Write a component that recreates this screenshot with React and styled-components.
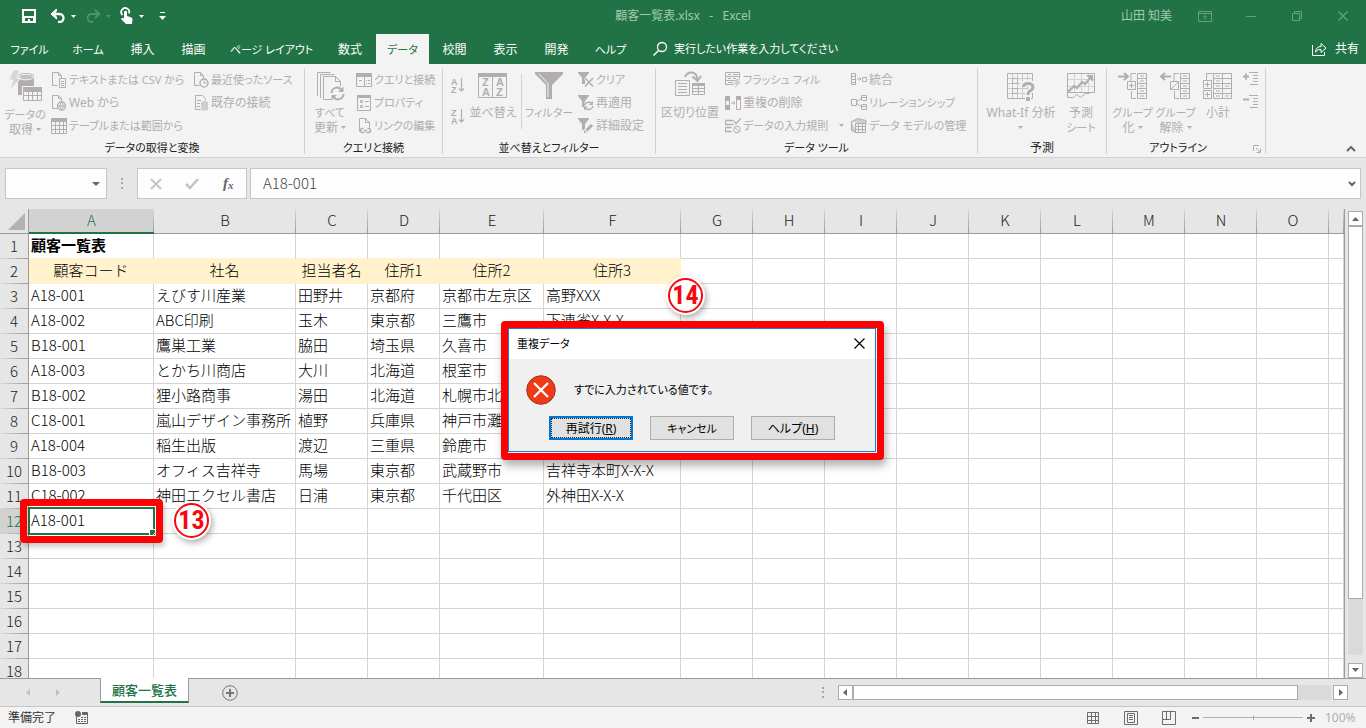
import React from "react";
import styled, { createGlobalStyle, css } from "styled-components";

const GREEN = "#217346";
const MUTED = "#b1adb1";
const UI_FONT = '"Noto Sans", "Noto Sans CJK JP", sans-serif';
const CELL_FONT = '"Noto Sans CJK JP", sans-serif';

/* Labels with katakana, or mostly kana, are set one size smaller than kanji labels. */
const labelSize = (text = "") => {
  const kana = (text.match(/[ぁ-んァ-ヶー]/g) || []).length;
  const compact = /[ァ-ヶー]/.test(text) || kana > text.length / 2;
  return compact ? 11 : 12;
};

const GlobalStyle = createGlobalStyle`
  *, *::before, *::after { box-sizing: border-box; }
  body { margin: 0; font-family: ${UI_FONT}; font-size: 12px; color: #222; }
  button, input { font: inherit; color: inherit; }
  button { border: 0; padding: 0; margin: 0; background: none; font-feature-settings: "palt"; }
  svg { display: block; flex: none; }
`;

const Window = styled.div`
  display: flex;
  flex-direction: column;
  height: 100vh;
  overflow: hidden;
  position: relative;
  background: #e6e6e6;
  font-feature-settings: "palt";
`;

const Label = styled.span`
  font-size: ${(p) => labelSize(p.children)}px;
  line-height: 15px;
  padding-bottom: 1px;
  white-space: nowrap;
`;

/* ---------- title bar ---------- */

const TitleBar = styled.header`
  display: grid;
  grid-template-columns: 1fr auto 1fr;
  align-items: center;
  height: 32px;
  flex: none;
  background: ${GREEN};
  color: #a3c9b1;
`;

const QuickAccess = styled.div`
  display: flex;
  align-items: center;
  gap: 4px;
  padding-left: 21px;
`;

const QuickButton = styled.button`
  display: flex;
  align-items: center;
  gap: 5px;
  height: 24px;
  color: ${(p) => (p.disabled ? "#4f9170" : "#fff")};
  margin-right: ${(p) => p.$after || 0}px;
`;

const DocumentTitle = styled.h1`
  margin: 0;
  padding-bottom: 2px;
  font-size: 12px;
  font-weight: 400;
  white-space: pre;
`;

const WindowControls = styled.div`
  display: flex;
  align-items: center;
  justify-content: flex-end;
`;

const UserName = styled.span`
  margin-right: 10px;
  padding-bottom: 2px;
`;

const ControlButton = styled.button`
  display: flex;
  align-items: center;
  justify-content: center;
  width: 46px;
  height: 32px;
  color: #64a17e;
`;

/* ---------- ribbon tabs ---------- */

const TabBar = styled.nav`
  display: flex;
  align-items: flex-end;
  height: 32px;
  flex: none;
  background: ${GREEN};
  color: #fff;
`;

const RibbonTab = styled.button`
  width: ${(p) => p.$width}px;
  height: 30px;
  background: ${(p) => (p.$active ? "#f3f3f3" : "transparent")};
  color: ${(p) => (p.$active ? GREEN : "#fff")};
`;

const TellMe = styled.label`
  display: flex;
  align-items: center;
  gap: 6px;
  height: 30px;
  margin-left: 13px;
`;

const TellMeInput = styled.input`
  width: 200px;
  padding: 0 0 1px;
  border: 0;
  outline: 0;
  background: none;
  font-size: 11px;
  font-feature-settings: "palt";
  &::placeholder { color: #fff; opacity: 1; }
`;

const ShareButton = styled.button`
  display: flex;
  align-items: center;
  gap: 8px;
  height: 30px;
  margin-left: auto;
  margin-right: 7px;
  color: #fff;
`;

/* ---------- ribbon ---------- */

const Ribbon = styled.section`
  display: flex;
  height: 94px;
  flex: none;
  padding-top: 4px;
  background: #f3f3f3;
  border-bottom: 1px solid #d2d2d2;
`;

const Group = styled.div`
  position: relative;
  display: flex;
  flex-direction: column;
  width: ${(p) => p.$width}px;
  height: 86px;
  flex: none;
  border-right: 1px solid #d2d2d2;
`;

const GroupTools = styled.div`
  display: flex;
  height: 70px;
  flex: none;
  padding-left: ${(p) => p.$inset || 0}px;
`;

const GroupLabel = styled.div`
  height: 20px;
  flex: none;
  padding-right: ${(p) => p.$reserve || 0}px;
  font-size: ${(p) => labelSize(p.children)}px;
  line-height: 20px;
  text-align: center;
  color: #222;
`;

const LargeButton = styled.button`
  display: flex;
  flex-direction: column;
  align-items: center;
  width: ${(p) => p.$width}px;
  flex: none;
  padding-top: 2px;
  gap: 3px;
  color: ${MUTED};
`;

const LabelLine = styled.span`
  display: flex;
  align-items: center;
  gap: 3px;
  height: 15px;
`;

const Column = styled.div`
  display: flex;
  flex-direction: column;
  flex: none;
  width: ${(p) => (p.$width ? `${p.$width}px` : "auto")};
  margin-left: ${(p) => p.$gap || 0}px;
`;

const SmallButton = styled.button`
  display: flex;
  align-items: center;
  gap: 2px;
  height: 23px;
  padding: 0 1px;
  color: ${MUTED};
`;

const SmallCaret = styled.span`
  margin-left: auto;
  margin-right: 5px;
`;

const SortColumn = styled.div`
  display: flex;
  flex-direction: column;
  align-items: center;
  width: 28px;
  padding: 6px 0 0 1px;
  gap: 8px;
  color: ${MUTED};
`;

const ToolRule = styled.div`
  width: 1px;
  height: 55px;
  margin: 6px 5px 0 6px;
  background: #d2d2d2;
`;

const Launcher = styled.button`
  position: absolute;
  right: 4px;
  bottom: 1px;
  color: ${MUTED};
`;

const CollapseButton = styled.button`
  margin-left: auto;
  align-self: flex-end;
  padding: 0 10px 5px 0;
  color: #666;
`;

/* ---------- formula bar ---------- */

const FormulaBar = styled.div`
  display: flex;
  align-items: center;
  height: 51px;
  flex: none;
  padding: 0 5px;
`;

const BarBox = styled.div`
  display: flex;
  align-items: center;
  height: 31px;
  background: #fdfdfd;
  border: 1px solid #c6c6c6;
  ${(p) => (p.$width ? css`width: ${p.$width}px; flex: none;` : css`flex: 1; margin-left: 3px;`)}
`;

const BarInput = styled.input`
  flex: 1;
  min-width: 0;
  height: 29px;
  padding: 0 0 2px 12px;
  border: 0;
  outline: 0;
  background: none;
  font-family: ${CELL_FONT};
  font-size: 15px;
  font-weight: 300;
  color: #444;
`;

const BarButton = styled.button`
  display: flex;
  align-items: center;
  justify-content: center;
  flex: ${(p) => (p.$narrow ? "none" : 1)};
  width: ${(p) => (p.$narrow ? `${p.$narrow}px` : "auto")};
  height: 29px;
  color: ${(p) => (p.$strong ? "#666" : "#c4c4c4")};
`;

const Grip = styled.div`
  display: flex;
  justify-content: center;
  width: 30px;
  flex: none;
  color: #a6a6a6;
`;

/* ---------- sheet ---------- */

const SheetArea = styled.main`
  display: flex;
  flex: 1;
  min-height: 0;
`;

const SheetView = styled.div`
  flex: 1;
  min-width: 0;
  overflow: hidden;
  background: #fff;
`;

const Grid = styled.table`
  width: 100%;
  table-layout: fixed;
  border-collapse: separate;
  border-spacing: 0;
  font-family: ${CELL_FONT};
  font-size: 15px;
  font-feature-settings: normal;
  color: #000;
`;

const ColumnHead = styled.th`
  height: 25px;
  padding: 0 0 2px;
  font-weight: 300;
  line-height: 20px;
  color: ${(p) => (p.$active ? GREEN : "#222")};
  border-bottom: ${(p) => (p.$active ? `2px solid ${GREEN}` : "1px solid #9b9b9b")};
  background:
    linear-gradient(#d8d8d8, #9b9b9b) right / 1px 100% no-repeat,
    ${(p) => (p.$active ? "#d2d2d2" : "#e6e6e6")};
`;

const Corner = styled.th`
  height: 25px;
  padding: 0 3px 3px 0;
  vertical-align: bottom;
  background: #e6e6e6;
  border-right: 1px solid #9b9b9b;
  border-bottom: 1px solid #9b9b9b;
  svg { margin-left: auto; }
`;

const RowHead = styled.th`
  height: 25px;
  padding: 0 0 2px;
  font-weight: 300;
  line-height: 20px;
  color: ${(p) => (p.$active ? GREEN : "#222")};
  border-right: 1px solid #9b9b9b;
  background:
    linear-gradient(to right, #d8d8d8, #9b9b9b) bottom / 100% 1px no-repeat,
    ${(p) => (p.$active ? "#d2d2d2" : "#e6e6e6")};
`;

const Cell = styled.td`
  position: relative;
  height: 25px;
  padding: 0 0 2px ${(p) => (p.$kind === "head" ? 0 : 2)}px;
  line-height: 20px;
  white-space: nowrap;
  font-weight: ${(p) => (p.$kind === "title" ? 700 : 300)};
  text-align: ${(p) => (p.$kind === "head" ? "center" : "left")};
  border-right: 1px solid #d4d4d4;
  border-bottom: 1px solid #d4d4d4;
  ${(p) => p.$aboveHead && css`border-bottom-color: #fff2cc;`}
  ${(p) => p.$kind === "head" && css`background: #fff2cc; border-color: #fff2cc;`}
`;

const Selection = styled.span`
  position: absolute;
  inset: -2px -2px -2px -1px;
  border: 2px solid ${GREEN};
  &::after {
    content: "";
    position: absolute;
    right: -2px;
    bottom: -2px;
    width: 5px;
    height: 5px;
    background: ${GREEN};
    outline: 1px solid #fff;
  }
`;

const CellFrame = styled.span`
  position: absolute;
  z-index: 1;
  inset: -10px -10px -10px -9px;
  border: 7px solid #fc0204;
  border-radius: 4px;
  box-shadow: 2px 4px 5px rgba(0, 0, 0, 0.2);
`;

const StepBadge = styled.span`
  position: absolute;
  z-index: 1;
  top: -6px;
  left: ${(p) => p.$left}px;
  display: flex;
  align-items: center;
  justify-content: center;
  width: 35px;
  height: 35px;
  padding-bottom: 2px;
  border: 2px solid #f40a0e;
  border-radius: 50%;
  background: #fff;
  box-shadow: 0 0 0 2px #fff, 2px 3px 6px 2px rgba(0, 0, 0, 0.3);
  font-family: "Liberation Sans Narrow", "Roboto Condensed", "Liberation Sans", sans-serif;
  font-size: 26px;
  font-weight: 700;
  line-height: 30px;
  color: #f40a0e;
`;

const VerticalScroll = styled.div`
  display: flex;
  flex-direction: column;
  width: 22px;
  flex: none;
  padding: 2px 3px 0 3px;
  border-left: 1px solid #9b9b9b;
  background: #e6e6e6;
`;

const ScrollButton = styled.button`
  display: flex;
  align-items: center;
  justify-content: center;
  width: 15px;
  height: 15px;
  flex: none;
  background: #fff;
  border: 1px solid #ababab;
  color: #666;
`;

const VerticalTrack = styled.div`
  flex: 1;
  margin-bottom: 8px;
  background: #dadada;
`;

const VerticalThumb = styled.div`
  height: 87%;
  border: 1px solid #ababab;
  background: #fff;
`;

/* ---------- sheet tabs ---------- */

const SheetBar = styled.div`
  display: flex;
  align-items: flex-start;
  height: 29px;
  flex: none;
  border-bottom: 1px solid #c6c6c6;
`;

const SheetNav = styled.div`
  display: flex;
  align-items: center;
  justify-content: center;
  gap: 22px;
  width: 100px;
  height: 28px;
  padding-right: 14px;
  border-top: 1px solid #9b9b9b;
  color: #c0c0c0;
`;

const SheetTab = styled.button`
  width: 89px;
  height: 25px;
  background: #fff;
  border: 1px solid #9b9b9b;
  border-top: 0;
  border-bottom: 2px solid ${GREEN};
  color: ${GREEN};
  font-size: 13px;
  font-weight: 500;
  line-height: 22px;
`;

const SheetBarRest = styled.div`
  display: flex;
  align-items: center;
  flex: 1;
  height: 28px;
  border-top: 1px solid #9b9b9b;
  padding: 0 18px 0 33px;
  color: #777;
`;

const HorizontalScroll = styled.div`
  display: flex;
  align-items: center;
  width: 48%;
  margin-left: auto;
  height: 15px;
`;

const HorizontalTrack = styled.div`
  flex: 1;
  height: 15px;
  margin-right: 2px;
  background: #dadada;
`;

const HorizontalThumb = styled.div`
  width: 93%;
  height: 15px;
  border: 1px solid #ababab;
  background: #fff;
`;

/* ---------- status bar ---------- */

const StatusBar = styled.footer`
  display: flex;
  align-items: center;
  height: 21px;
  flex: none;
  padding: 0 8px;
  background: #f3f3f3;
  color: #333;
`;

const MacroButton = styled.button`
  margin-left: 19px;
  color: #666;
`;

const StatusRight = styled.div`
  display: flex;
  align-items: center;
  margin-left: auto;
  color: #6c6c6c;
`;

const ViewButton = styled.button`
  width: 14px;
  margin-right: ${(p) => p.$after}px;
`;

const ZoomSlider = styled.input`
  appearance: none;
  width: 100px;
  height: 14px;
  margin: 0 4px;
  background:
    linear-gradient(#b0b0b0, #b0b0b0) center / 100% 1px no-repeat,
    linear-gradient(#b0b0b0, #b0b0b0) center / 1px 5px no-repeat;
  &::-webkit-slider-thumb { appearance: none; width: 1px; height: 5px; background: #b0b0b0; }
`;

const ZoomValue = styled.span`
  width: 33px;
  margin-left: 10px;
  color: #b0b0b0;
`;

/* ---------- dialog ---------- */

const DialogFrame = styled.div`
  position: absolute;
  z-index: 2;
  top: 321px;
  left: calc(50% - 182px);
  width: 383px;
  border: 7px solid #fc0204;
  border-radius: 4px;
  background: #fff;
  padding: 0 1px 1px 0;
  box-shadow: 2px 6px 8px rgba(0, 0, 0, 0.3);
`;

const DialogBox = styled.section`
  border: 1px solid #1883d7;
  background: #f0f0f0;
  color: #000;
`;

const DialogTitle = styled.div`
  display: flex;
  align-items: center;
  justify-content: space-between;
  height: 30px;
  padding: 0 10px 1px 8px;
  background: #fff;
`;

const DialogMessage = styled.div`
  display: flex;
  align-items: center;
  gap: 18px;
  height: 62px;
  padding: 0 17px;
`;

const DialogActions = styled.div`
  display: flex;
  gap: 17px;
  height: 35px;
  margin-top: -5px;
  padding: 0 0 0 40px;
`;

const DialogButton = styled.button`
  width: 84px;
  height: 24px;
  background: #e1e1e1;
  border: ${(p) => (p.$focused ? "2px solid #0078d7" : "1px solid #adadad")};
  ${(p) => p.$focused && css`outline: 1px dotted #222; outline-offset: -3px;`}
`;

/* ---------- icons ---------- */

const Svg = ({ w = 16, h = 16, children, ...rest }) => (
  <svg width={w} height={h} viewBox={`0 0 ${w} ${h}`} fill="none" stroke="currentColor" aria-hidden="true" {...rest}>
    {children}
  </svg>
);

const Caret = ({ w = 5, h = 3 }) => (
  <Svg w={w} h={h} fill="currentColor" stroke="none">
    <path d={`M0 0H${w}L${w / 2} ${h}Z`} />
  </Svg>
);

const SaveIcon = () => (
  <Svg>
    <path fill="currentColor" stroke="none" fillRule="evenodd" d="M1 1h14v14H1zM3 3v5h10V3zM4 10v3h3v-2h2v2h3v-3z" />
  </Svg>
);
const UndoIcon = () => (
  <Svg w={16} h={14}>
    <path d="M4 5h5.500a4 4 0 0 1 0 8H8" strokeWidth="2.300" />
    <path d="M6.500 0L1 5l5.500 5V8L4 5l2.500-3z" fill="currentColor" />
  </Svg>
);
const RedoIcon = () => (
  <Svg w={16} h={14}>
    <path d="M14 5H6.500a4 4 0 0 0 0 8H8" strokeWidth="1.800" />
    <path d="M10 1l4.500 4L10 9" strokeWidth="1.800" />
  </Svg>
);
const TouchIcon = () => (
  <Svg w={14} h={18}>
    <path d="M2.500 8A4 4 0 1 1 9 6.500" strokeWidth="1.800" />
    <path fill="currentColor" stroke="none" d="M4 4.500q1.500-1.500 3 0V9l4.500 1.500q1 .5 1 2L12 17H6l-5-5q.5-1.500 2-1l1 .8z" />
  </Svg>
);
const CustomizeIcon = () => (
  <Svg w={7} h={8} fill="currentColor" stroke="none">
    <path d="M1 0h5v1H1zM0 4h7L3.500 8z" />
  </Svg>
);
const RibbonOptionsIcon = () => (
  <Svg w={14} h={11}>
    <path d="M.5.500h13v10H.500zM.5 2.500h13M7 9V4.500M5 6.500l2-2 2 2" />
  </Svg>
);
const MinimizeIcon = () => <Svg w={10} h={10}><path d="M0 5.500h10" /></Svg>;
const RestoreIcon = () => <Svg w={10} h={10}><path d="M.5 2.500h7v7h-7zM2.500 2.500v-2h7v7h-2" /></Svg>;
const CloseIcon = ({ size = 10 }) => (
  <Svg w={size} h={size}><path d={`M.5.500L${size - 0.5} ${size - 0.5}M${size - 0.5}.500L.5 ${size - 0.5}`} strokeWidth="1.200" /></Svg>
);
const SearchIcon = () => (
  <Svg><circle cx="10" cy="6" r="4.500" strokeWidth="1.300" /><path d="M6.500 9.500L1.500 14.500" strokeWidth="1.500" /></Svg>
);
const ShareIcon = () => (
  <Svg>
    <path d="M1.500 4v10.500h12V11" />
    <path d="M4.500 11q.5-5.500 5.500-5.500V2.500L15 7l-5 4.500V8.500Q6.500 8 4.500 11z" />
  </Svg>
);

const DataGetIcon = () => (
  <Svg w={34} h={34} stroke="none">
    <path fill="currentColor" d="M10 6q1-3 8-3t8 3v19H10z" />
    <ellipse cx="18" cy="7" rx="7.500" ry="2.800" fill="#c4c0c4" stroke="#f3f3f3" />
    <path fill="#d8d5d8" stroke="#f3f3f3" d="M5 0h7L9 8h4L2 20l3-10H1z" />
    <path fill="#f3f3f3" d="M14 16h20v18H14z" />
    <path fill="currentColor" d="M15 17h19v4H15z" />
    <path stroke="currentColor" d="M15.500 17.500h18v13h-18zM15.500 25.500h18M15.500 21.500h18M20.500 21v9M24.500 21v9M29.500 21v9" />
  </Svg>
);
const page = "M1.500.500h6l3 3v3M1.500.500v13h5M7.500.500v3h3";
const TextFileIcon = () => (
  <Svg><path d={page} /><path d="M8.500 6.500h6v9h-6zM10 9.500h3M10 11.500h3M10 13.500h3" /></Svg>
);
const WebIcon = () => (
  <Svg><path d={page} /><circle cx="10.500" cy="11" r="4" strokeWidth="1.300" /><path d="M6.500 11h8M10.500 7c-2 2-2 6 0 8M10.500 7c2 2 2 6 0 8" /></Svg>
);
const TableIcon = () => (
  <Svg>
    <path fill="currentColor" stroke="none" d="M0 0h16v4H0z" />
    <path d="M.5.500h15v15H.500zM.5 7.500h15M.5 11.500h15M4.500 4v11M8.500 4v11M12.500 4v11" />
  </Svg>
);
const RecentIcon = () => (
  <Svg><path d={page} /><circle cx="11" cy="11" r="4" strokeWidth="1.300" /><path d="M11 8.500V11h2.500" /></Svg>
);
const ExistingIcon = () => (
  <Svg>
    <path d="M2.500.500h7l3 3v2M2.500.500v14h5M4 5.500h4M4 8.500h3M4 11.500h3" />
    <path fill="#d0ccd0" stroke="none" d="M8 8q0-2 3.500-2T15 8v6q0 1.500-3.500 1.500T8 14z" />
  </Svg>
);
const RefreshArrows = ({ x = 0, y = 0 }) => (
  <g transform={`translate(${x} ${y})`}>
    <path d="M1.500 7a5.500 5.500 0 0 1 10-3M13.500 8a5.500 5.500 0 0 1-10 3" strokeWidth="2" />
    <path d="M13.500.500v5.500H8zM1.500 14.500V9H7z" fill="currentColor" stroke="none" />
  </g>
);
const RefreshAllIcon = () => (
  <Svg w={32} h={32}>
    <path d="M3.500 26V2.500h13M6.500 28V4.500h14M9.500 29.500V6.500h12l5 5v5M21.500 6.500v5h5M9.500 29.500h8" />
    <RefreshArrows x={16} y={16} />
  </Svg>
);
const QueryPanelIcon = () => (
  <Svg>
    <path fill="currentColor" stroke="none" d="M0 1h16v4H0z" />
    <path d="M.5 1.500h15v13H.500zM8.500 5v9M3 8.500h3M10 8.500h1M12 8.500h2M10 11.500h1M12 11.500h2" />
  </Svg>
);
const PropertiesIcon = () => (
  <Svg>
    <path fill="currentColor" stroke="none" d="M1 0h14v3H1z" />
    <path d="M1.500.500h13v15h-13zM4.500 5.500h2v2h-2zM4.500 10.500h2v2h-2zM9 6.500h4M9 11.500h4" />
  </Svg>
);
const EditLinksIcon = () => (
  <Svg>
    <path d="M3.500 13.500v-13h6l4 4v5M9.500.500v4h4" />
    <path d="M7.500 10.500h-1a2 2 0 0 0 0 4h2M11 12.500H8M11.500 10.500h1a2 2 0 0 1 0 4h-2" strokeWidth="1.500" />
  </Svg>
);
const letterStyle = { fontFamily: '"Liberation Sans", sans-serif', fontWeight: 700 };
const SortIcon = ({ first, second }) => (
  <Svg w={16} h={23}>
    <g fill="currentColor" stroke="none" fontSize="9" {...letterStyle}>
      <text x="1" y="11">{first}</text>
      <text x="1" y="19">{second}</text>
    </g>
    <path d="M11.500 4v13M9 14.500l2.500 2.500L14 14.500" strokeWidth="1.200" />
  </Svg>
);
const SortDialogIcon = () => (
  <Svg w={30} h={32}>
    <path fill="currentColor" stroke="none" d="M0 3h29v4H0z" />
    <path d="M.5 3.500h28v24H.500zM14.500 7v20" />
    <g fill="currentColor" stroke="none" fontSize="11" {...letterStyle}>
      <text x="4" y="16">Z</text><text x="4" y="26">A</text>
      <text x="18" y="16">A</text><text x="18" y="26">Z</text>
    </g>
  </Svg>
);
const FilterIcon = () => (
  <Svg w={28} h={32} stroke="none">
    <path fill="currentColor" d="M0 2h28v2L17 15v14h-6V15L0 4z" />
    <path stroke="#f3f3f3" d="M4 4l9 9.500V27" />
  </Svg>
);
const smallFunnel = <path fill="currentColor" stroke="none" d="M0 0h11v1L7 6v6H4V6L0 1z" />;
const ClearIcon = () => (
  <Svg>{smallFunnel}<path d="M7 6l8 9M15 6l-8 9" stroke="#f3f3f3" strokeWidth="3" /><path d="M7 6l8 8.500M15 6l-8 8.500" strokeWidth="1.500" /></Svg>
);
const ReapplyIcon = () => (
  <Svg>{smallFunnel}<path stroke="#f3f3f3" strokeWidth="8" d="M10.500 7v8" />
    <path d="M6.500 10a4.500 4 0 0 1 7.500-1.500M15 11a4.500 4 0 0 1-7.500 2.500" strokeWidth="1.500" /><path d="M15 6v4h-4zM6 15.500v-4h4z" fill="currentColor" stroke="none" />
  </Svg>
);
const AdvancedIcon = () => (
  <Svg>{smallFunnel}<path d="M7 14l7-7" stroke="#f3f3f3" strokeWidth="5" /><path d="M8.500 12.500L14 7" strokeWidth="3" /><path fill="currentColor" stroke="none" d="M6 15v-3l3 2.500z" /></Svg>
);
const SplitIcon = () => (
  <Svg w={32} h={32}>
    <path d="M1.500 10.500h14v15h-14zM4 13.500h9M4 16.500h9M4 19.500h9M4 22.500h9" />
    <path d="M18.500 14.500h12v10h-12zM18.500 18.500h12M18.500 21.500h12M24.500 14v10" />
    <path fill="currentColor" stroke="none" d="M18 13h13v3H18z" />
    <path d="M11 7q2-5 7-4.500 5 .5 5.500 7.500" strokeWidth="2" />
    <path d="M18.500 6.500l5 4.500 3.500-5" strokeWidth="2" />
  </Svg>
);
const FlashFillIcon = () => (
  <Svg><path d="M.5.500h14v6M.5.500v12h8M.5 4.500h14M.5 8.500h10M3 2.500h3M8 2.500h5M3 6.500h3M3 10.500h5M8 6.500h3" />
    <path fill="#d0ccd0" stroke="none" d="M11 7h4l-2 3h3l-6 6 1-4H9z" /></Svg>
);
const DuplicatesIcon = () => (
  <Svg><path d="M.5 1.500h4v13h-4zM11.500 1.500h4v13h-4zM6 8h4M8.500 6.500L10 8 8.500 9.500" />
    <path fill="currentColor" stroke="none" d="M0 1h5v5H0zM0 10h5v5H0zM11 1h5v4h-5z" /></Svg>
);
const ValidationIcon = () => (
  <Svg><path d="M.5 2.500h8M.5 2.500v4h8M.5 9.500h6M.5 9.500v4h6M9 3l2 3 4.500-5.500" strokeWidth="1.300" />
    <circle cx="12" cy="11.500" r="3.300" /><path d="M9.500 9.500l5 4" /></Svg>
);
const ConsolidateIcon = () => (
  <Svg><path d="M.5 1.500h4v11h-4zM.5 4.500h4M.5 7.500h4M.5 10.500h4M6 7h4M8.500 5.500L10 7 8.500 8.500M11.500 5.500h4v4h-4z" /></Svg>
);
const RelationIcon = () => (
  <Svg><path d="M.5 4.500h5v6h-5zM10.500.500h5v5h-5zM10.500 9.500h5v5h-5zM5.500 7l5-4M5.500 8l5 4M10.500 2.500h5M10.500 11.500h5" /></Svg>
);
const DataModelIcon = () => (
  <Svg>
    <path d="M.5 3.500L7 .500l8 2v4M.5 3.500v9l5 2.500" fill="#d0ccd0" />
    <path d="M4.500 5.500h10v9h-10zM4.500 8.500h10M4.500 11.500h10M7.500 5.500v9M11.500 5.500v9" fill="#f3f3f3" />
  </Svg>
);
const WhatIfIcon = () => (
  <Svg w={30} h={32}>
    <path stroke="#cbc7cb" d="M1.500 8.500h25M1.500 13.500h25M1.500 18.500h25M1.500 23.500h25M6.500 3v25M11.500 3v25M16.500 3v25M21.500 3v25" />
    <path d="M1.500 3.500h25v25h-25zM6.500 8.500h5v5h-5zM6.500 18.500h5v5h-5z" />
    <path d="M17 17q0-4 5-4t5 4q0 2.500-3 4-2 1-2 5.500" stroke="#f3f3f3" strokeWidth="6" />
    <path d="M17.500 17q0-3.500 4.500-3.500t5 3.500q0 2.500-3 4-2 1-2 4" strokeWidth="3" />
    <path fill="currentColor" stroke="#f3f3f3" d="M19.500 26.500h5v5h-5z" />
  </Svg>
);
const ForecastIcon = () => (
  <Svg w={30} h={32}>
    <path stroke="#d4d0d4" d="M8.500 4v18M15.500 4v18M22.500 4v18M2 9.500h26M2 16.500h26" />
    <path d="M1.500 3.500h27v19h-27z" />
    <path d="M1.500 22v5.500h6l3-3 4 3 5-4h4" />
    <path d="M2 22l6-6 3 2 5-6 3 2 7-8" strokeWidth="2.200" />
    <path fill="currentColor" stroke="none" d="M20 5h7v7z" />
  </Svg>
);
const rowStack = "M21.500 3.500h9v25h-9zM21.500 8.500h9M21.500 13.500h9M21.500 18.500h9M21.500 23.500h9M24 6h4M24 11h4M24 16h4M24 21h4M24 26h4";
const GroupIcon = () => (
  <Svg w={34} h={32}>
    <path d={rowStack} /><path d="M20 3.500h-5V11M15.500 21v7.500H20M11.500 11.500h8v8h-8zM13 15.500h5M15.500 13v5" />
    <path d="M2 6.500h9M8 3l4 3.500-4 3.500" strokeWidth="2" />
  </Svg>
);
const UngroupIcon = () => (
  <Svg w={34} h={32}>
    <path d={rowStack} /><path d="M20 3.500h-5V11M15.500 21v7.500H20M11.500 11.500h8v8h-8zM12 19l7-7" />
    <path d="M12 6.500H3M6 3L2 6.500 6 10" strokeWidth="2" />
  </Svg>
);
const SubtotalIcon = () => (
  <Svg w={32} h={32}>
    <path d="M11.500 3.500h18v25h-18zM11.500 8.500h18M11.500 13.500h18M11.500 18.500h18M11.500 23.500h18M20.500 3v25M4.500 11V3.500H11M14 6h4M14 11h4M14 16h4M14 21h4M14 26h4M23 16h4M23 26h4" />
    <path d="M1.500 10.500h8v8h-8zM1.500 20.500h8v8h-8zM3 14.500h5M5.500 12v5M3 24.500h5M5.500 22v5" fill="#f3f3f3" />
  </Svg>
);
const DetailIcon = ({ plus }) => (
  <Svg h={18}>
    <path d={plus ? "M0 5.500h6M3 2.500v6" : "M0 5.500h6"} strokeWidth="2" />
    <path d="M6 1.500h9M10 4.500h5M10 7.500h5M10 10.500h5M7 13.500h8" />
  </Svg>
);
const LauncherIcon = () => <Svg w={8} h={8}><path d="M.5 6V.500H6M3 3l4 4M7.500 3.500v4h-4" /></Svg>;
const ChevronUp = () => <Svg w={10} h={6}><path d="M1 5l4-4 4 4" strokeWidth="2" /></Svg>;
const ChevronDown = () => <Svg w={8} h={6}><path d="M1 1l3 3 3-3" strokeWidth="2" /></Svg>;
const GripIcon = () => (
  <Svg w={2} h={11} fill="currentColor" stroke="none"><path d="M0 0h2v2H0zM0 4h2v2H0zM0 9h2v2H0z" /></Svg>
);
const CancelIcon = () => <Svg w={12} h={12}><path d="M1 1l10 10M11 1L1 11" strokeWidth="2" /></Svg>;
const CheckIcon = () => <Svg w={14} h={12}><path d="M1 6l4 4 8-9" strokeWidth="2.500" /></Svg>;
const FxIcon = () => (
  <Svg w={14} h={14} fill="currentColor" stroke="none">
    <g fontFamily='"Liberation Serif", serif' fontStyle="italic" fontWeight="700">
      <text x="2" y="11" fontSize="15">f</text><text x="7" y="12" fontSize="11">x</text>
    </g>
  </Svg>
);
const CornerIcon = () => <Svg w={17} h={17} fill="#b2b2b2" stroke="none"><path d="M17 0v17H0z" /></Svg>;
const Triangle = ({ dir }) => {
  const paths = { up: "M0 6l3.500-4L7 6z", down: "M0 1h7L3.500 5z", left: "M5 0v7L1 3.500z", right: "M2 0v7l4-3.500z" };
  return <Svg w={7} h={7} fill="currentColor" stroke="none"><path d={paths[dir]} /></Svg>;
};
const AddSheetIcon = () => (
  <Svg><circle cx="8" cy="8" r="7.300" /><path d="M4 8h8M8 4v8" strokeWidth="2" /></Svg>
);
const MacroIcon = () => (
  <Svg w={13} h={13}>
    <path d="M1.500 5v7.500h11v-11H7M3 8.500h2M6 8.500h2M9 8.500h2M3 10.500h2M6 10.500h2M9 10.500h2M6 6.500h2M9 6.500h2" />
    <path d="M7 2.500h5" strokeWidth="3" /><circle cx="3" cy="3" r="3" fill="currentColor" stroke="none" />
  </Svg>
);
const NormalViewIcon = () => <Svg w={14} h={14}><path d="M1.500 1.500h11v11h-11zM1.500 5.500h11M1.500 9.500h11M5.500 1v11M9.500 1v11" /></Svg>;
const PageViewIcon = () => <Svg w={14} h={14}><path d="M.5.500h13v13H.500zM3.500 2.500h7v9h-7zM5 4.500h4M5 6.500h4M5 8.500h4" /></Svg>;
const BreakViewIcon = () => <Svg w={14} h={14}><path d="M.5.500h13v13H.500zM.5 8.500h8v-8M4.500.500v8" /></Svg>;
const ErrorIcon = () => (
  <Svg w={30} h={30}>
    <circle cx="15" cy="15" r="14.300" fill="#f03a17" stroke="#a93122" />
    <path d="M8 8l14 14M22 8L8 22" stroke="#fff" strokeWidth="2.300" />
  </Svg>
);

/* ---------- data ---------- */

const tabs = [
  ["ファイル", 59], ["ホーム", 58], ["挿入", 51], ["描画", 51], ["ページ レイアウト", 105], ["数式", 52],
  ["データ", 53], ["校閲", 51], ["表示", 51], ["開発", 51], ["ヘルプ", 57],
];

const columns = [
  ["A", 125], ["B", 142], ["C", 72], ["D", 72], ["E", 104], ["F", 137], ["G", 72], ["H", 72],
  ["I", 72], ["J", 72], ["K", 72], ["L", 72], ["M", 72], ["N", 72], ["O", 72],
];

const records = [
  ["顧客一覧表"],
  ["顧客コード", "社名", "担当者名", "住所1", "住所2", "住所3"],
  ["A18-001", "えびす川産業", "田野井", "京都府", "京都市左京区", "高野XXX"],
  ["A18-002", "ABC印刷", "玉木", "東京都", "三鷹市", "下連雀X-X-X"],
  ["B18-001", "鷹巣工業", "脇田", "埼玉県", "久喜市", ""],
  ["A18-003", "とかち川商店", "大川", "北海道", "根室市", ""],
  ["B18-002", "狸小路商事", "湯田", "北海道", "札幌市北区", ""],
  ["C18-001", "嵐山デザイン事務所", "植野", "兵庫県", "神戸市灘区", ""],
  ["A18-004", "稲生出版", "渡辺", "三重県", "鈴鹿市", ""],
  ["B18-003", "オフィス吉祥寺", "馬場", "東京都", "武蔵野市", "吉祥寺本町X-X-X"],
  ["C18-002", "神田エクセル書店", "日浦", "東京都", "千代田区", "外神田X-X-X"],
  ["A18-001"],
];

const ROWS = 18;
const ACTIVE_ROW = 11;

const Large = ({ icon, lines, width, caret }) => (
  <LargeButton disabled $width={width}>
    {icon}
    <span>
      {lines.map((line, i) => (
        <LabelLine key={i} style={{ justifyContent: "center" }}>
          {line && <Label>{line}</Label>}
          {caret && i === lines.length - 1 && <Caret />}
        </LabelLine>
      ))}
    </span>
  </LargeButton>
);

const Small = ({ icon, label, caret, hint }) => (
  <SmallButton disabled aria-label={hint}>
    {icon}
    {label && <Label>{label}</Label>}
    {caret && <SmallCaret><Caret /></SmallCaret>}
  </SmallButton>
);

const cellKind = (r, c) => {
  if (r === 0 && c === 0) return "title";
  if (r === 1 && c < 6) return "head";
  return "body";
};

export default function App() {
  return (
    <>
      <GlobalStyle />
      <Window>
        <TitleBar>
          <QuickAccess>
            <QuickButton aria-label="上書き保存" $after={9}><SaveIcon /></QuickButton>
            <QuickButton aria-label="元に戻す" $after={5}><UndoIcon /><Caret /></QuickButton>
            <QuickButton aria-label="やり直し" disabled $after={5}><RedoIcon /><Caret /></QuickButton>
            <QuickButton aria-label="タッチ/マウス モードの切り替え" $after={11}><TouchIcon /><Caret /></QuickButton>
            <QuickButton aria-label="クイック アクセス ツール バーのユーザー設定"><CustomizeIcon /></QuickButton>
          </QuickAccess>
          <DocumentTitle>{"顧客一覧表.xlsx   -   Excel"}</DocumentTitle>
          <WindowControls>
            <UserName>山田 知美</UserName>
            <ControlButton aria-label="リボンの表示オプション"><RibbonOptionsIcon /></ControlButton>
            <ControlButton aria-label="最小化"><MinimizeIcon /></ControlButton>
            <ControlButton aria-label="元のサイズに戻す"><RestoreIcon /></ControlButton>
            <ControlButton aria-label="閉じる"><CloseIcon /></ControlButton>
          </WindowControls>
        </TitleBar>

        <TabBar>
          {tabs.map(([name, width]) => (
            <RibbonTab key={name} $width={width} $active={name === "データ"}><Label>{name}</Label></RibbonTab>
          ))}
          <TellMe>
            <SearchIcon />
            <TellMeInput aria-label="操作アシスト" placeholder="実行したい作業を入力してください" />
          </TellMe>
          <ShareButton><ShareIcon /><Label>共有</Label></ShareButton>
        </TabBar>

        <Ribbon>
          <Group $width={305}>
            <GroupTools>
              <Large icon={<DataGetIcon />} lines={["データの", "取得"]} width={50} caret />
              <Column $width={142}>
                <Small icon={<TextFileIcon />} label="テキストまたは CSV から" />
                <Small icon={<WebIcon />} label="Web から" />
                <Small icon={<TableIcon />} label="テーブルまたは範囲から" />
              </Column>
              <Column>
                <Small icon={<RecentIcon />} label="最近使ったソース" />
                <Small icon={<ExistingIcon />} label="既存の接続" />
              </Column>
            </GroupTools>
            <GroupLabel>データの取得と変換</GroupLabel>
          </Group>
          <Group $width={138}>
            <GroupTools>
              <Large icon={<RefreshAllIcon />} lines={["すべて", "更新"]} width={50} caret />
              <Column>
                <Small icon={<QueryPanelIcon />} label="クエリと接続" />
                <Small icon={<PropertiesIcon />} label="プロパティ" />
                <Small icon={<EditLinksIcon />} label="リンクの編集" />
              </Column>
            </GroupTools>
            <GroupLabel>クエリと接続</GroupLabel>
          </Group>
          <Group $width={213}>
            <GroupTools>
              <SortColumn>
                <SortIcon first="A" second="Z" />
                <SortIcon first="Z" second="A" />
              </SortColumn>
              <Large icon={<SortDialogIcon />} lines={["並べ替え"]} width={44} />
              <ToolRule />
              <Large icon={<FilterIcon />} lines={["フィルター"]} width={44} />
              <Column $gap={6}>
                <Small icon={<ClearIcon />} label="クリア" />
                <Small icon={<ReapplyIcon />} label="再適用" />
                <Small icon={<AdvancedIcon />} label="詳細設定" />
              </Column>
            </GroupTools>
            <GroupLabel>並べ替えとフィルター</GroupLabel>
          </Group>
          <Group $width={322}>
            <GroupTools>
              <Large icon={<SplitIcon />} lines={["区切り位置"]} width={68} />
              <Column $width={126}>
                <Small icon={<FlashFillIcon />} label="フラッシュ フィル" />
                <Small icon={<DuplicatesIcon />} label="重複の削除" />
                <Small icon={<ValidationIcon />} label="データの入力規則" caret />
              </Column>
              <Column>
                <Small icon={<ConsolidateIcon />} label="統合" />
                <Small icon={<RelationIcon />} label="リレーションシップ" />
                <Small icon={<DataModelIcon />} label="データ モデルの管理" />
              </Column>
            </GroupTools>
            <GroupLabel>データ ツール</GroupLabel>
          </Group>
          <Group $width={129}>
            <GroupTools>
              <Large icon={<WhatIfIcon />} lines={["What-If 分析", ""]} width={86} caret />
              <Large icon={<ForecastIcon />} lines={["予測", "シート"]} width={34} />
            </GroupTools>
            <GroupLabel>予測</GroupLabel>
          </Group>
          <Group $width={159}>
            <GroupTools $inset={4}>
              <Large icon={<GroupIcon />} lines={["グループ", "化"]} width={43} caret />
              <Large icon={<UngroupIcon />} lines={["グループ", "解除"]} width={43} caret />
              <Large icon={<SubtotalIcon />} lines={["小計"]} width={42} />
              <Column $gap={3}>
                <Small icon={<DetailIcon plus />} hint="詳細データの表示" />
                <Small icon={<DetailIcon />} hint="詳細を表示しない" />
              </Column>
            </GroupTools>
            <GroupLabel $reserve={16}>アウトライン</GroupLabel>
            <Launcher aria-label="アウトラインの設定"><LauncherIcon /></Launcher>
          </Group>
          <CollapseButton aria-label="リボンを折りたたむ"><ChevronUp /></CollapseButton>
        </Ribbon>

        <FormulaBar>
          <BarBox $width={102}>
            <BarInput aria-label="名前ボックス" />
            <BarButton $narrow={20} $strong aria-label="名前の一覧"><Caret w={8} h={4} /></BarButton>
          </BarBox>
          <Grip><GripIcon /></Grip>
          <BarBox $width={110}>
            <BarButton aria-label="キャンセル"><CancelIcon /></BarButton>
            <BarButton aria-label="入力"><CheckIcon /></BarButton>
            <BarButton $strong aria-label="関数の挿入"><FxIcon /></BarButton>
          </BarBox>
          <BarBox>
            <BarInput aria-label="数式バー" defaultValue="A18-001" />
            <BarButton $narrow={16} $strong aria-label="数式バーの展開"><ChevronDown /></BarButton>
          </BarBox>
        </FormulaBar>

        <SheetArea>
          <SheetView>
            <Grid>
              <colgroup>
                <col style={{ width: 29 }} />
                {columns.map(([name, width]) => <col key={name} style={{ width }} />)}
                <col />
              </colgroup>
              <thead>
                <tr>
                  <Corner><CornerIcon /></Corner>
                  {columns.map(([name], c) => <ColumnHead key={name} $active={c === 0}>{name}</ColumnHead>)}
                  <ColumnHead />
                </tr>
              </thead>
              <tbody>
                {Array.from({ length: ROWS }, (_, r) => (
                  <tr key={r}>
                    <RowHead $active={r === ACTIVE_ROW}>{r + 1}</RowHead>
                    {columns.map(([name], c) => (
                      <Cell key={name} $kind={cellKind(r, c)} $aboveHead={r === 0 && c < 6}>
                        {records[r]?.[c]}
                        {r === 2 && c === 5 && <StepBadge $left={124}>14</StepBadge>}
                        {r === ACTIVE_ROW && c === 0 && (
                          <>
                            <Selection />
                            <CellFrame />
                            <StepBadge $left={145}>13</StepBadge>
                          </>
                        )}
                      </Cell>
                    ))}
                    <Cell />
                  </tr>
                ))}
              </tbody>
            </Grid>
          </SheetView>
          <VerticalScroll>
            <ScrollButton aria-label="上へスクロール"><Triangle dir="up" /></ScrollButton>
            <VerticalTrack><VerticalThumb /></VerticalTrack>
            <ScrollButton aria-label="下へスクロール"><Triangle dir="down" /></ScrollButton>
          </VerticalScroll>
        </SheetArea>

        <SheetBar>
          <SheetNav><Triangle dir="left" /><Triangle dir="right" /></SheetNav>
          <SheetTab>顧客一覧表</SheetTab>
          <SheetBarRest>
            <button aria-label="新しいシート"><AddSheetIcon /></button>
            <HorizontalScroll>
              <Grip><GripIcon /></Grip>
              <ScrollButton aria-label="左へスクロール"><Triangle dir="left" /></ScrollButton>
              <HorizontalTrack><HorizontalThumb /></HorizontalTrack>
              <ScrollButton aria-label="右へスクロール"><Triangle dir="right" /></ScrollButton>
            </HorizontalScroll>
          </SheetBarRest>
        </SheetBar>

        <StatusBar>
          <Label>準備完了</Label>
          <MacroButton aria-label="マクロの記録"><MacroIcon /></MacroButton>
          <StatusRight>
            <ViewButton $after={24} aria-label="標準"><NormalViewIcon /></ViewButton>
            <ViewButton $after={24} aria-label="ページ レイアウト"><PageViewIcon /></ViewButton>
            <ViewButton $after={16} aria-label="改ページ プレビュー"><BreakViewIcon /></ViewButton>
            <button aria-label="縮小"><Svg w={7} h={8}><path d="M0 4h7" strokeWidth="2" /></Svg></button>
            <ZoomSlider type="range" min="10" max="190" defaultValue="100" aria-label="ズーム" />
            <button aria-label="拡大"><Svg w={8} h={8}><path d="M0 4h8M4 0v8" strokeWidth="2" /></Svg></button>
            <ZoomValue>100%</ZoomValue>
          </StatusRight>
        </StatusBar>

        <DialogFrame>
          <DialogBox role="alertdialog" aria-label="重複データ">
            <DialogTitle>
              <Label>重複データ</Label>
              <button aria-label="閉じる"><CloseIcon size={11} /></button>
            </DialogTitle>
            <DialogMessage><ErrorIcon /><Label>すでに入力されている値です。</Label></DialogMessage>
            <DialogActions>
              <DialogButton $focused>再試行(<u>R</u>)</DialogButton>
              <DialogButton><Label>キャンセル</Label></DialogButton>
              <DialogButton>ヘルプ(<u>H</u>)</DialogButton>
            </DialogActions>
          </DialogBox>
        </DialogFrame>
      </Window>
    </>
  );
}
